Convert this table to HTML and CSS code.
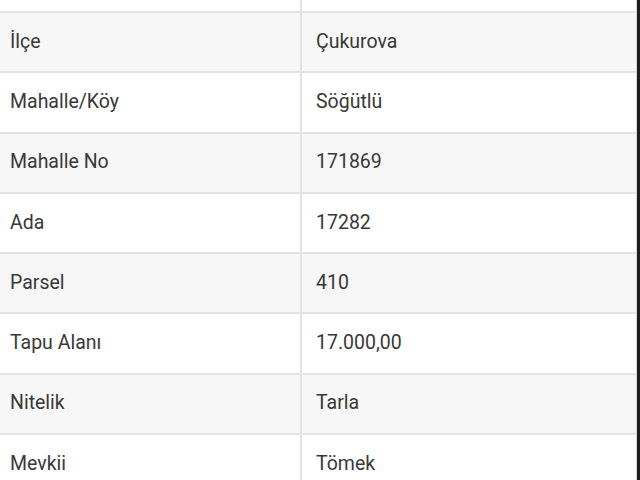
FILE: index.html
```html
<!DOCTYPE html>
<html lang="tr">
<head>
<meta charset="utf-8">
<title>Tapu Bilgileri</title>
<link rel="stylesheet" href="styles.css">
</head>
<body>
<div class="frame">
  <div class="table">
    <div class="row top"><div class="cell label"></div><div class="cell value"></div></div>
    <div class="row alt"><div class="cell label">İlçe</div><div class="cell value">Çukurova</div></div>
    <div class="row"><div class="cell label">Mahalle/Köy</div><div class="cell value">Söğütlü</div></div>
    <div class="row alt"><div class="cell label">Mahalle No</div><div class="cell value">171869</div></div>
    <div class="row"><div class="cell label">Ada</div><div class="cell value">17282</div></div>
    <div class="row alt"><div class="cell label">Parsel</div><div class="cell value">410</div></div>
    <div class="row"><div class="cell label">Tapu Alanı</div><div class="cell value">17.000,00</div></div>
    <div class="row alt"><div class="cell label">Nitelik</div><div class="cell value">Tarla</div></div>
    <div class="row"><div class="cell label">Mevkii</div><div class="cell value">Tömek</div></div>
  </div>
</div>
</body>
</html>
```
FILE: styles.css
```css
html, body {
  margin: 0;
  padding: 0;
  height: 480px;
  overflow: hidden;
  background: #1e1e1e;
}
.frame {
  width: 636px;
  height: 480px;
  background: #ffffff;
  border-right: 1px solid #d8d8d8;
  overflow: hidden;
}
.table {
  display: flex;
  flex-direction: column;
}
.row {
  display: grid;
  grid-template-columns: 302px 1fr;
  height: 58.3px;
  border-bottom: 2px solid #e3e3e3;
  background: #ffffff;
  font-family: Roboto, "Noto Sans", sans-serif;
  font-size: 19.5px;
  color: #383838;
}
.row.top {
  height: 11px;
}
.row.alt {
  background: #f7f7f7;
}
.cell {
  display: flex;
  align-items: center;
  padding-bottom: 2px;
}
.label {
  padding-left: 10px;
  border-right: 2px solid #e3e3e3;
}
.value {
  padding-left: 14px;
}
```
